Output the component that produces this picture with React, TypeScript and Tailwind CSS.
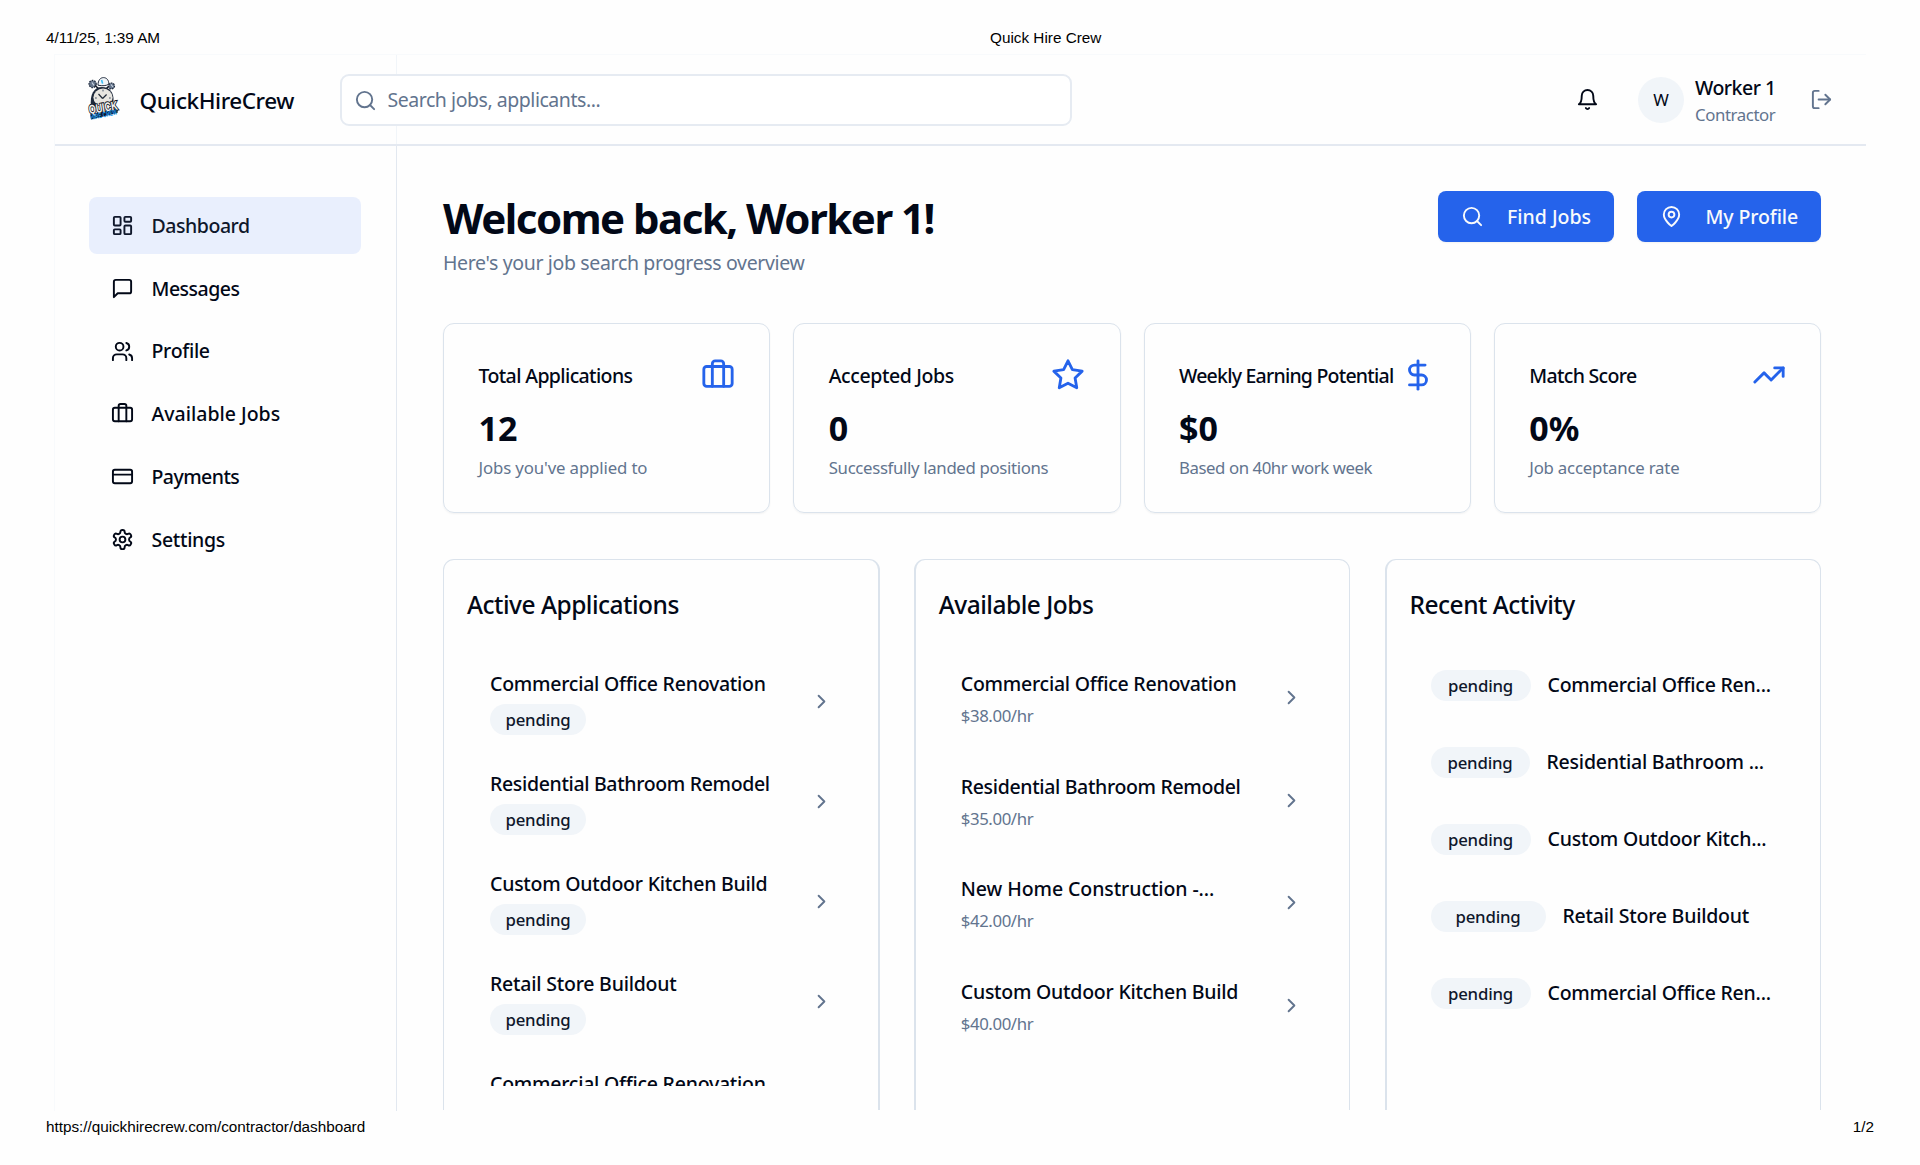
import React from 'react';

const ICONS: Record<string, React.ReactNode> = {
  search: (
    <>
      <circle cx="11" cy="11" r="8" />
      <path d="m21 21-4.3-4.3" />
    </>
  ),
  bell: (
    <>
      <path d="M6 8a6 6 0 0 1 12 0c0 7 3 9 3 9H3s3-2 3-9" />
      <path d="M10.3 21a1.94 1.94 0 0 0 3.4 0" />
    </>
  ),
  logout: (
    <>
      <path d="M9 21H5a2 2 0 0 1-2-2V5a2 2 0 0 1 2-2h4" />
      <polyline points="16 17 21 12 16 7" />
      <line x1="21" x2="9" y1="12" y2="12" />
    </>
  ),
  dashboard: (
    <>
      <rect width="7" height="9" x="3" y="3" rx="1" />
      <rect width="7" height="5" x="14" y="3" rx="1" />
      <rect width="7" height="9" x="14" y="12" rx="1" />
      <rect width="7" height="5" x="3" y="16" rx="1" />
    </>
  ),
  message: <path d="M21 15a2 2 0 0 1-2 2H7l-4 4V5a2 2 0 0 1 2-2h14a2 2 0 0 1 2 2z" />,
  users: (
    <>
      <path d="M16 21v-2a4 4 0 0 0-4-4H6a4 4 0 0 0-4 4v2" />
      <circle cx="9" cy="7" r="4" />
      <path d="M22 21v-2a4 4 0 0 0-3-3.87" />
      <path d="M16 3.13a4 4 0 0 1 0 7.75" />
    </>
  ),
  briefcase: (
    <>
      <path d="M16 20V4a2 2 0 0 0-2-2h-4a2 2 0 0 0-2 2v16" />
      <rect width="20" height="14" x="2" y="6" rx="2" />
    </>
  ),
  card: (
    <>
      <rect width="20" height="14" x="2" y="5" rx="2" />
      <line x1="2" x2="22" y1="10" y2="10" />
    </>
  ),
  settings: (
    <>
      <path d="M12.22 2h-.44a2 2 0 0 0-2 2v.18a2 2 0 0 1-1 1.73l-.43.25a2 2 0 0 1-2 0l-.15-.08a2 2 0 0 0-2.73.73l-.22.38a2 2 0 0 0 .73 2.73l.15.1a2 2 0 0 1 1 1.72v.51a2 2 0 0 1-1 1.74l-.15.09a2 2 0 0 0-.73 2.73l.22.38a2 2 0 0 0 2.73.73l.15-.08a2 2 0 0 1 2 0l.43.25a2 2 0 0 1 1 1.73V20a2 2 0 0 0 2 2h.44a2 2 0 0 0 2-2v-.18a2 2 0 0 1 1-1.73l.43-.25a2 2 0 0 1 2 0l.15.08a2 2 0 0 0 2.73-.73l.22-.39a2 2 0 0 0-.73-2.73l-.15-.08a2 2 0 0 1-1-1.74v-.5a2 2 0 0 1 1-1.74l.15-.09a2 2 0 0 0 .73-2.73l-.22-.38a2 2 0 0 0-2.73-.73l-.15.08a2 2 0 0 1-2 0l-.43-.25a2 2 0 0 1-1-1.73V4a2 2 0 0 0-2-2z" />
      <circle cx="12" cy="12" r="3" />
    </>
  ),
  pin: (
    <>
      <path d="M20 10c0 6-8 12-8 12s-8-6-8-12a8 8 0 0 1 16 0Z" />
      <circle cx="12" cy="10" r="3" />
    </>
  ),
  star: (
    <polygon points="12 2 15.09 8.26 22 9.27 17 14.14 18.18 21.02 12 17.77 5.82 21.02 7 14.14 2 9.27 8.91 8.26 12 2" />
  ),
  dollar: (
    <>
      <line x1="12" x2="12" y1="2" y2="22" />
      <path d="M17 5H9.5a3.5 3.5 0 0 0 0 7h5a3.5 3.5 0 0 1 0 7H6" />
    </>
  ),
  trending: (
    <>
      <polyline points="22 7 13.5 15.5 8.5 10.5 2 17" />
      <polyline points="16 7 22 7 22 13" />
    </>
  ),
  chevron: <path d="m9 18 6-6-6-6" />,
};

function Icon({ name, className = 'size-[23px]' }: { name: string; className?: string }) {
  return (
    <svg
      viewBox="0 0 24 24"
      fill="none"
      stroke="currentColor"
      strokeWidth="2"
      strokeLinecap="round"
      strokeLinejoin="round"
      className={`shrink-0 ${className}`}
    >
      {ICONS[name]}
    </svg>
  );
}

function Logo() {
  return (
    <svg viewBox="0 0 32 43" className="h-[43px] w-8 shrink-0 overflow-visible">
      <g fill="#64748b" stroke="#1e293b" strokeWidth="1.2">
        <circle cx="4.6" cy="7" r="3.6" strokeDasharray="1.6 1" />
        <circle cx="23.5" cy="9" r="3" strokeDasharray="1.6 1" />
      </g>
      <path d="M4 5.5l2 3M23 7.5l2 2.5" stroke="#cbd5e1" strokeWidth="1.2" />
      <path d="M7 8.5 11 12M20.5 9.5 18 12" stroke="#111827" strokeWidth="1.6" />
      <path d="M3 30C1.5 17 6 10 14 10s12 6 11.5 14l-1 3z" fill="#1e293b" />
      <ellipse cx="15" cy="20.5" rx="9.6" ry="9" fill="#e7e5e0" />
      <path d="M14.6 21.5 10.5 17M14.6 21.5l4-4" stroke="#1f2937" strokeWidth="1.2" />
      <path d="M15 12.6v1.8M7 21h1.8M21 21h1.8" stroke="#475569" strokeWidth="1" />
      <path d="M10 8.2C10 3.2 12.4.6 15.5.6s5.4 2.6 5.4 6.6c-2.6 1.6-6.6 2-10.9 1z" fill="#f1f5f9" stroke="#1e293b" strokeWidth="1" />
      <path d="m13.6 3 1 3.6" stroke="#38bdf8" strokeWidth="1.6" />
      <path d="M2 37.5 30 31l-.5 5L3 42.6z" fill="#0f172a" />
      <text
        x="1.5"
        y="37"
        transform="rotate(-9 1.5 37)"
        textLength="29"
        lengthAdjust="spacingAndGlyphs"
        fontSize="12.5"
        strokeWidth="2"
        paintOrder="stroke"
        className="fill-[#f5f3ee] stroke-[#111827] font-['Liberation_Sans'] font-bold"
      >
        QUICK
      </text>
      <text
        x="3"
        y="43"
        transform="rotate(-12 3 43)"
        textLength="27"
        lengthAdjust="spacingAndGlyphs"
        fontSize="7.6"
        className="fill-[#1d9bf0] font-['Liberation_Sans'] font-bold"
      >
        HIRE CREW
      </text>
    </svg>
  );
}

const NAV = [
  { label: 'Dashboard', icon: 'dashboard', tracking: 'tracking-[-0.45px]' },
  { label: 'Messages', icon: 'message', tracking: 'tracking-[-0.5px]' },
  { label: 'Profile', icon: 'users', tracking: 'tracking-[-0.3px]' },
  { label: 'Available Jobs', icon: 'briefcase', tracking: 'tracking-[0px]' },
  { label: 'Payments', icon: 'card', tracking: 'tracking-[-0.55px]' },
  { label: 'Settings', icon: 'settings', tracking: 'tracking-[-0.3px]' },
];

const STATS = [
  { title: 'Total Applications', icon: 'briefcase', value: '12', note: "Jobs you've applied to", titleTracking: 'tracking-[-0.62px]', noteTracking: 'tracking-[-0.13px]' },
  { title: 'Accepted Jobs', icon: 'star', value: '0', note: 'Successfully landed positions', titleTracking: 'tracking-[-0.4px]', noteTracking: 'tracking-[-0.34px]' },
  { title: 'Weekly Earning Potential', icon: 'dollar', value: '$0', note: 'Based on 40hr work week', titleTracking: 'tracking-[-0.77px]', noteTracking: 'tracking-[-0.43px]' },
  { title: 'Match Score', icon: 'trending', value: '0%', note: 'Job acceptance rate', titleTracking: 'tracking-[-0.68px]', noteTracking: 'tracking-[-0.2px]' },
];

const APPLICATIONS = [
  { title: 'Commercial Office Renovation', tracking: 'tracking-[-0.24px]' },
  { title: 'Residential Bathroom Remodel', tracking: 'tracking-[-0.34px]' },
  { title: 'Custom Outdoor Kitchen Build', tracking: 'tracking-[-0.24px]' },
  { title: 'Retail Store Buildout', tracking: 'tracking-[-0.22px]' },
  { title: 'Commercial Office Renovation', tracking: 'tracking-[-0.24px]' },
];

const JOBS = [
  { title: 'Commercial Office Renovation', rate: '$38.00/hr', tracking: 'tracking-[-0.24px]' },
  { title: 'Residential Bathroom Remodel', rate: '$35.00/hr', tracking: 'tracking-[-0.34px]' },
  { title: 'New Home Construction -...', rate: '$42.00/hr', tracking: 'tracking-[-0.08px]' },
  { title: 'Custom Outdoor Kitchen Build', rate: '$40.00/hr', tracking: 'tracking-[-0.24px]' },
];

const ACTIVITY = [
  { title: 'Commercial Office Ren...', badge: 'w-[100px]' },
  { title: 'Residential Bathroom ...', badge: 'w-[99px]' },
  { title: 'Custom Outdoor Kitch...', badge: 'w-[100px]' },
  { title: 'Retail Store Buildout', badge: 'w-[115px]' },
  { title: 'Commercial Office Ren...', badge: 'w-[100px]' },
];

const ITEM_TITLE = 'whitespace-nowrap text-[19.5px] leading-7 font-medium';

function Badge({ width }: { width: string }) {
  return (
    <span
      className={`flex h-[31px] shrink-0 items-center justify-center rounded-full bg-slate-100 pt-px text-[16.8px] font-medium tracking-[-0.2px] text-slate-900 ${width}`}
    >
      pending
    </span>
  );
}

function Panel({ title, edges, children }: { title: string; edges: string; children: React.ReactNode }) {
  return (
    <section className={`h-[551px] w-[436.5px] rounded-t-[11px] border-t border-[#dbe3ec] pt-[27px] ${edges}`}>
      <h2 className="pl-[23px] text-[24.5px] leading-9 font-medium tracking-[-0.5px]">{title}</h2>
      {children}
    </section>
  );
}

export default function App() {
  return (
    <div className="flex h-[1165px] w-[1920px] flex-col overflow-hidden bg-[#fefefe] font-['Noto_Sans',sans-serif] text-[#020817]">
      <div className="grid h-[54px] shrink-0 grid-cols-[944px_1fr] pt-[29px] pl-[46px] font-['Liberation_Sans',sans-serif] text-[15.3px] leading-[18px] text-black">
        <span className="tracking-[-0.03px]">4/11/25, 1:39 AM</span>
        <span>Quick Hire Crew</span>
      </div>

      <div className="ml-[54px] flex h-[1057px] w-[1812px] shrink-0 flex-col border-t border-l border-slate-50">
        <header className="flex h-[91px] shrink-0 border-b-2 border-[#e4e9f1]">
          <div className="flex w-[341.5px] shrink-0 border-r border-slate-100">
            <div className="flex items-center gap-[20px] pl-[32.5px]">
              <div className="pb-[3px]">
                <Logo />
              </div>
              <span className="pt-[2px] text-[22.5px] font-medium tracking-[-0.45px]">QuickHireCrew</span>
            </div>
          </div>
          <div className="relative -ml-[56.5px] mt-[19px] flex h-[52px] w-[732px] items-center gap-[10.5px] rounded-[9px] border-2 border-[#e6ebf2] bg-white pl-[12px] text-slate-500">
            <Icon name="search" />
            <span className="text-[19.5px] tracking-[-0.46px]">Search jobs, applicants...</span>
          </div>
          <div className="ml-auto flex items-center pr-[33px]">
            <Icon name="bell" />
            <span className="ml-[39.5px] flex size-[46px] items-center justify-center rounded-full bg-slate-100 pt-px text-[16.8px]">
              W
            </span>
            <div className="ml-[11px] w-[82px] pt-[3px]">
              <div className="text-[19.5px] leading-7 font-medium tracking-[-0.5px] whitespace-nowrap">Worker 1</div>
              <div className="text-[16.8px] leading-[26px] tracking-[-0.4px] text-slate-500">Contractor</div>
            </div>
            <span className="ml-[33px] text-slate-500">
              <Icon name="logout" />
            </span>
          </div>
        </header>

        <div className="flex min-h-0 flex-1">
          <aside className="w-[341.5px] shrink-0 border-r border-slate-200 pt-[51px] pl-[33.5px]">
            <nav className="flex flex-col gap-[6.4px]">
              {NAV.map((item, i) => (
                <div
                  key={item.label}
                  className={`flex h-[56.5px] w-[272.5px] items-center gap-[18px] rounded-lg pl-[22px] ${i === 0 ? 'bg-[#e9effd] text-slate-900' : ''}`}
                >
                  <Icon name={item.icon} />
                  <span className={`text-[19.5px] font-medium ${item.tracking}`}>{item.label}</span>
                </div>
              ))}
            </nav>
          </aside>

          <main className="w-[1424.5px] shrink-0 pt-11 pl-[46.5px]">
            <div className="flex h-[86px] justify-between">
              <div>
                <h1 className="text-[42px] leading-[56px] font-bold tracking-[-1.53px]">Welcome back, Worker 1!</h1>
                <p className="mt-[3px] text-[19.5px] leading-7 tracking-[-0.35px] text-slate-500">
                  Here's your job search progress overview
                </p>
              </div>
              <div className="flex h-[52px] gap-[23px] text-[19.5px] font-medium text-slate-50">
                <div className="mt-px flex w-[175.5px] items-center gap-[23.5px] rounded-lg bg-[#2563eb] pl-[22.5px] shadow-xs">
                  <Icon name="search" />
                  <span>Find Jobs</span>
                </div>
                <div className="mt-px flex w-[184.5px] items-center gap-[23px] rounded-lg bg-[#2563eb] pl-[23px] shadow-xs">
                  <Icon name="pin" />
                  <span className="tracking-[-0.1px]">My Profile</span>
                </div>
              </div>
            </div>

            <div className="mt-[46.5px] grid grid-cols-4 gap-[23px]">
              {STATS.map((s) => (
                <div
                  key={s.title}
                  className="h-[190.5px] rounded-[11px] border border-[#dbe3ec] pt-[34px] pr-[34.5px] pl-[34.5px] shadow-xs"
                >
                  <div className="flex h-[34px] items-center justify-between">
                    <span className={`pt-[2px] text-[19.5px] font-medium whitespace-nowrap ${s.titleTracking}`}>{s.title}</span>
                    <Icon name={s.icon} className="size-[34px] text-[#2563eb]" />
                  </div>
                  <div className="mt-[13px] text-[34px] leading-[46px] font-bold">{s.value}</div>
                  <div className={`mt-[5px] text-[16.8px] leading-6 whitespace-nowrap text-slate-500 ${s.noteTracking}`}>{s.note}</div>
                </div>
              ))}
            </div>

            <div className="mt-[46px] flex justify-between">
              <Panel title="Active Applications" edges="border-l border-r-2">
                <ul className="mt-[29px] h-[434px] overflow-hidden pr-[45px] pl-[46px]">
                  {APPLICATIONS.map((app, i) => (
                    <li key={i} className="flex h-[100px] items-center justify-between">
                      <div>
                        <div className={`${ITEM_TITLE} ${app.tracking}`}>{app.title}</div>
                        <div className="mt-1.5 h-[31px]">{i < 4 && <Badge width="w-[96px]" />}</div>
                      </div>
                      <span className="mb-0.5 text-slate-500">
                        <Icon name="chevron" />
                      </span>
                    </li>
                  ))}
                </ul>
              </Panel>
              <Panel title="Available Jobs" edges="border-l-2 border-r">
                <ul className="mt-[24.5px] pr-[46.5px] pl-[45px]">
                  {JOBS.map((job) => (
                    <li key={job.title} className="flex h-[102.8px] items-center justify-between">
                      <div>
                        <div className={`${ITEM_TITLE} ${job.tracking}`}>{job.title}</div>
                        <div className="mt-[6px] text-[16.8px] leading-6 tracking-[-0.4px] text-slate-500">{job.rate}</div>
                      </div>
                      <span className="mb-[3px] text-slate-500">
                        <Icon name="chevron" />
                      </span>
                    </li>
                  ))}
                </ul>
              </Panel>
              <Panel title="Recent Activity" edges="border-l-2 border-r">
                <ul className="mt-[23.8px] pl-[44px]">
                  {ACTIVITY.map((a, i) => (
                    <li key={i} className="flex h-[77px] items-center gap-[17px]">
                      <Badge width={a.badge} />
                      <span className={`${ITEM_TITLE} tracking-[-0.22px]`}>{a.title}</span>
                    </li>
                  ))}
                </ul>
              </Panel>
            </div>
          </main>
        </div>
      </div>

      <div className="flex justify-between pt-[7px] pr-[46px] pl-[46px] font-['Liberation_Sans',sans-serif] text-[15.3px] leading-[18px] text-black">
        <span className="tracking-[-0.03px]">https://quickhirecrew.com/contractor/dashboard</span>
        <span>1/2</span>
      </div>
    </div>
  );
}
